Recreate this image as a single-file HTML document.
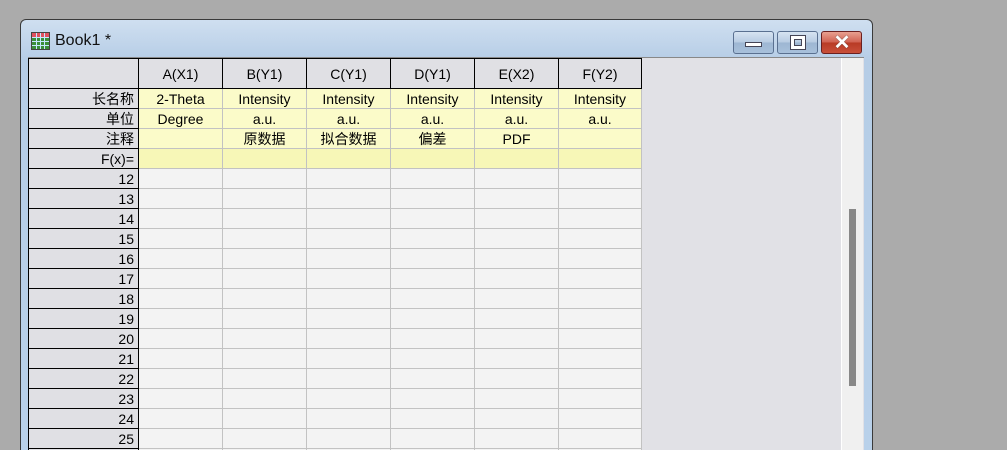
<!DOCTYPE html>
<html><head><meta charset="utf-8"><style>
*{margin:0;padding:0;box-sizing:border-box}
html,body{width:1007px;height:450px;overflow:hidden}
body{background:#ababab;position:relative;font-family:"Liberation Sans","Noto Sans CJK SC",sans-serif;font-size:14px;color:#000}
.win{position:absolute;left:20px;top:19px;width:853px;height:440px;border:1px solid #3a3a3a;border-radius:6px 6px 0 0;background:linear-gradient(#cfdff0,#b6cde6 40px,#b9d1ea);}
.title{position:absolute;left:34px;top:12px;font-size:16px;color:#111}
.client{position:absolute;left:28px;top:57px;width:836px;height:400px;background:#e1e1e6;border-top:1px solid #888}
.sb{position:absolute;left:841px;top:58px;width:22px;height:400px;background:#f0f0f0;border-left:1px solid #fff}
.thumb{position:absolute;left:849px;top:209px;width:7px;height:177px;background:#888}
table{position:absolute;left:28px;top:58px;border-collapse:collapse;table-layout:fixed}
td{height:20px;border:1px solid #c2c2c2;text-align:center;line-height:18px;padding:0;overflow:hidden;white-space:nowrap}
td.h{background:#e0e0e4;border:1px solid #000;text-align:right;padding-right:4px}
tr.hd td{height:30px;background:#e0e0e4;border:1px solid #000;text-align:center}
tr.y td{background:#fbfbc9}
tr.f td{background:#f7f7b7}
tr.d td{background:#f3f3f3}
tr td.h{background:#e0e0e4}
.btn{position:absolute;top:11px;height:23px;border:1px solid #5a7090;border-radius:3px;background:linear-gradient(#d6e3f1,#b7cbe2 50%,#9db6d2 51%,#a8c0db)}
</style></head><body>
<div class="win">
<svg style="position:absolute;left:10px;top:12px" width="19" height="18"><rect x="0.5" y="0.5" width="18" height="17" fill="#3a8f3a" stroke="#444"/><rect x="1" y="1" width="17" height="4" fill="#e05060"/><g stroke="#c6e8ff" stroke-width="1"><line x1="1" y1="5.5" x2="18" y2="5.5"/><line x1="1" y1="9.5" x2="18" y2="9.5"/><line x1="1" y1="13.5" x2="18" y2="13.5"/><line x1="5.5" y1="1" x2="5.5" y2="17"/><line x1="9.5" y1="1" x2="9.5" y2="17"/><line x1="13.5" y1="1" x2="13.5" y2="17"/></g></svg>
<div class="title">Book1 *</div>
<div class="btn" style="left:712px;width:41px"><div style="position:absolute;left:11px;top:10px;width:17px;height:5px;background:#fff;border:1px solid #445"></div></div>
<div class="btn" style="left:756px;width:41px"><div style="position:absolute;left:13px;top:4px;width:14px;height:13px;border:3px solid #fff;box-shadow:0 0 0 1px #445, inset 0 0 0 1px #445"></div></div>
<div class="btn" style="left:800px;width:41px;border-color:#6a2020;background:linear-gradient(#e8a090,#d06050 50%,#b83a25 51%,#c8503a)"><div style="position:absolute;left:0;top:0;width:40px;height:22px;color:#fff;font-size:20px;font-weight:bold;text-align:center;line-height:22px;text-shadow:0 0 1px #333">✕</div></div>
</div>
<div class="client"></div>
<div class="sb"></div><div class="thumb"></div>
<table>
<colgroup><col style="width:110px"><col style="width:84px"><col style="width:84px"><col style="width:84px"><col style="width:84px"><col style="width:84px"><col style="width:83px"></colgroup>
<tr class="hd"><td></td><td>A(X1)</td><td>B(Y1)</td><td>C(Y1)</td><td>D(Y1)</td><td>E(X2)</td><td>F(Y2)</td></tr>
<tr class="y"><td class="h">长名称</td><td>2-Theta</td><td>Intensity</td><td>Intensity</td><td>Intensity</td><td>Intensity</td><td>Intensity</td></tr>
<tr class="y"><td class="h">单位</td><td>Degree</td><td>a.u.</td><td>a.u.</td><td>a.u.</td><td>a.u.</td><td>a.u.</td></tr>
<tr class="y"><td class="h">注释</td><td></td><td>原数据</td><td>拟合数据</td><td>偏差</td><td>PDF</td><td></td></tr>
<tr class="f"><td class="h">F(x)=</td><td></td><td></td><td></td><td></td><td></td><td></td></tr>
<tr class="d"><td class="h">12</td><td></td><td></td><td></td><td></td><td></td><td></td></tr>
<tr class="d"><td class="h">13</td><td></td><td></td><td></td><td></td><td></td><td></td></tr>
<tr class="d"><td class="h">14</td><td></td><td></td><td></td><td></td><td></td><td></td></tr>
<tr class="d"><td class="h">15</td><td></td><td></td><td></td><td></td><td></td><td></td></tr>
<tr class="d"><td class="h">16</td><td></td><td></td><td></td><td></td><td></td><td></td></tr>
<tr class="d"><td class="h">17</td><td></td><td></td><td></td><td></td><td></td><td></td></tr>
<tr class="d"><td class="h">18</td><td></td><td></td><td></td><td></td><td></td><td></td></tr>
<tr class="d"><td class="h">19</td><td></td><td></td><td></td><td></td><td></td><td></td></tr>
<tr class="d"><td class="h">20</td><td></td><td></td><td></td><td></td><td></td><td></td></tr>
<tr class="d"><td class="h">21</td><td></td><td></td><td></td><td></td><td></td><td></td></tr>
<tr class="d"><td class="h">22</td><td></td><td></td><td></td><td></td><td></td><td></td></tr>
<tr class="d"><td class="h">23</td><td></td><td></td><td></td><td></td><td></td><td></td></tr>
<tr class="d"><td class="h">24</td><td></td><td></td><td></td><td></td><td></td><td></td></tr>
<tr class="d"><td class="h">25</td><td></td><td></td><td></td><td></td><td></td><td></td></tr>
<tr class="d"><td class="h">26</td><td></td><td></td><td></td><td></td><td></td><td></td></tr>
</table>
</body></html>
